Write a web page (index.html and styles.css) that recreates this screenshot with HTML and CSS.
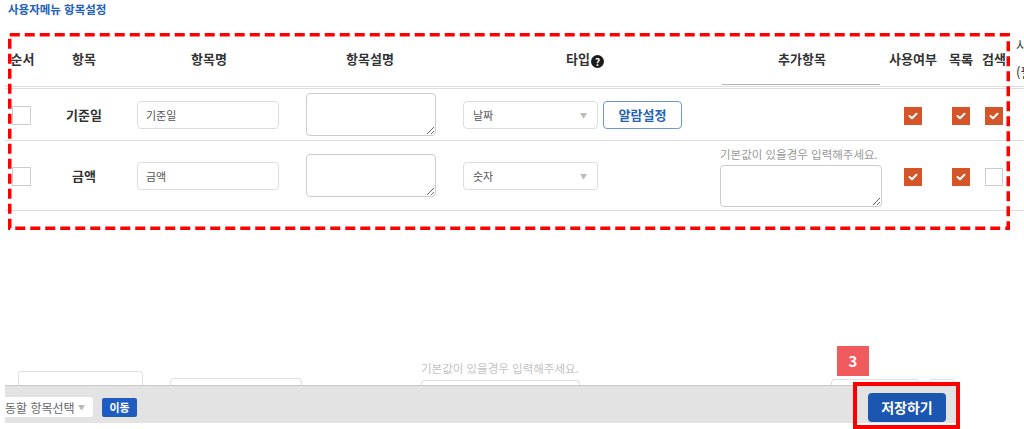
FILE: index.html
```html
<!DOCTYPE html>
<html lang="ko">
<head>
<meta charset="UTF-8">
<meta name="viewport" content="width=device-width, initial-scale=1.0">
<title>사용자메뉴 항목설정</title>
<link rel="stylesheet" href="styles.css">
</head>
<body>

<h3 class="page-title">사용자메뉴 항목설정</h3>

<div class="grid-wrap">
  <table class="item-table">
    <thead>
      <tr>
        <th class="c-order">순서</th>
        <th class="c-item">항목</th>
        <th class="c-name">항목명</th>
        <th class="c-desc">항목설명</th>
        <th class="c-type">타입<span class="help">?</span></th>
        <th class="c-extra">추가항목</th>
        <th class="c-use">사용여부</th>
        <th class="c-list">목록</th>
        <th class="c-search">검색</th>
        <th class="c-more"><span class="more-top">사</span><span class="more-bottom">(필</span></th>
      </tr>
    </thead>
    <tbody>
      <tr>
        <td class="order"><span class="chk"></span></td>
        <td class="item-name">기준일</td>
        <td class="name-cell"><input class="txt" type="text" value="기준일"></td>
        <td class="desc-cell"><textarea class="memo"></textarea></td>
        <td class="type-cell">
          <div class="type-box">
            <div class="select">날짜<span class="arrow">▼</span></div>
            <button class="alarm-btn">알람설정</button>
          </div>
        </td>
        <td class="extra-cell"></td>
        <td class="c"><span class="chk on"><svg width="10" height="8" viewBox="0 0 10 8"><polyline points="1.5,4 4,6.3 8.5,1.7" fill="none" stroke="#fff" stroke-width="2" stroke-linecap="round" stroke-linejoin="round"/></svg></span></td>
        <td class="c"><span class="chk on"><svg width="10" height="8" viewBox="0 0 10 8"><polyline points="1.5,4 4,6.3 8.5,1.7" fill="none" stroke="#fff" stroke-width="2" stroke-linecap="round" stroke-linejoin="round"/></svg></span></td>
        <td class="c"><span class="chk on"><svg width="10" height="8" viewBox="0 0 10 8"><polyline points="1.5,4 4,6.3 8.5,1.7" fill="none" stroke="#fff" stroke-width="2" stroke-linecap="round" stroke-linejoin="round"/></svg></span></td>
        <td></td>
      </tr>
      <tr>
        <td class="order"><span class="chk"></span></td>
        <td class="item-name">금액</td>
        <td class="name-cell"><input class="txt" type="text" value="금액"></td>
        <td class="desc-cell"><textarea class="memo"></textarea></td>
        <td class="type-cell">
          <div class="type-box">
            <div class="select">숫자<span class="arrow">▼</span></div>
          </div>
        </td>
        <td class="extra-cell">
          <p class="hint">기본값이 있을경우 입력해주세요.</p>
          <textarea class="memo wide"></textarea>
        </td>
        <td class="c"><span class="chk on"><svg width="10" height="8" viewBox="0 0 10 8"><polyline points="1.5,4 4,6.3 8.5,1.7" fill="none" stroke="#fff" stroke-width="2" stroke-linecap="round" stroke-linejoin="round"/></svg></span></td>
        <td class="c"><span class="chk on"><svg width="10" height="8" viewBox="0 0 10 8"><polyline points="1.5,4 4,6.3 8.5,1.7" fill="none" stroke="#fff" stroke-width="2" stroke-linecap="round" stroke-linejoin="round"/></svg></span></td>
        <td class="c"><span class="chk"></span></td>
        <td></td>
      </tr>
    </tbody>
  </table>

  <!-- annotation: dashed highlight -->
  <svg class="focus-box" width="1002" height="197" viewBox="0 0 1002 197">
    <rect x="1.75" y="1.75" width="998.5" height="193.5" fill="none" stroke="#f00" stroke-width="3.5" stroke-dasharray="10 5"/>
  </svg>
</div>

<div class="footer-area">
  <div class="ghost-row">
    <div class="ghost g1"></div>
    <div class="ghost g2"></div>
    <div class="ghost-col">
      <span class="ghost-hint">기본값이 있을경우 입력해주세요.</span>
      <div class="ghost g3"></div>
    </div>
    <div class="ghost g4"></div>
    <div class="ghost g5"></div>
  </div>

  <div class="action-bar">
    <div class="move-select">동할 항목선택<span class="arrow">▼</span></div>
    <button class="move-btn">이동</button>
    <button class="save-btn">저장하기</button>
  </div>

  <!-- annotation: step marker -->
  <span class="step-badge">3</span>
  <div class="hl-box"></div>
</div>

</body>
</html>
```

FILE: styles.css
```css
body {
  margin: 0;
  width: 1024px;
  height: 429px;
  overflow: hidden;
  display: flex;
  flex-direction: column;
  font-family: "Noto Sans CJK KR", "Noto Sans", sans-serif;
  color: #333;
  background-color: #fff;
}

.page-title {
  margin: 0;
  padding: 3px 8px 0;
  font-size: 11.5px;
  line-height: 13px;
  font-weight: 700;
  color: #2461b8;
}

.grid-wrap {
  position: relative;
  margin: 14px 0 0 5px;
}

.item-table {
  border-collapse: collapse;
  table-layout: fixed;
  width: 1063px;
}

th {
  height: 56px;
  padding: 0;
  font-size: 13px;
  font-weight: 700;
  color: #333;
  text-align: center;
  vertical-align: middle;
  border-bottom: 3px double #ddd;
}

td {
  padding: 4px 0;
  border-bottom: 1px solid #ddd;
  vertical-align: middle;
  font-size: 13px;
}

.c-order { width: 35px; }
.c-item { width: 88px; }
.c-name { width: 162px; }
.c-desc { width: 160px; }
.c-type { width: 270px; }
.c-extra { width: 164px; position: relative; }
.c-use { width: 58px; }
.c-list { width: 38px; }
.c-search { width: 28px; }
.c-more { width: 60px; text-align: left; padding-left: 8px; }

.c-extra::after {
  content: "";
  position: absolute;
  left: 2px;
  bottom: 1px;
  width: 158px;
  height: 1px;
  background-color: #b4b4b4;
}

.more-top, .more-bottom {
  display: block;
  font-weight: 400;
  line-height: 14px;
}

.more-bottom {
  margin-top: 13px;
}

.help {
  display: inline-block;
  width: 13px;
  height: 13px;
  margin-left: 1px;
  border-radius: 50%;
  background-color: #1a1a1a;
  color: #fff;
  font-size: 10px;
  line-height: 13px;
  text-align: center;
  vertical-align: -2px;
}

.order {
  text-align: center;
  padding-right: 2px;
}

.item-name {
  text-align: center;
  font-weight: 700;
  color: #333;
}

.name-cell { padding-left: 9px; }
.desc-cell { padding-left: 16px; }
.type-cell { padding-left: 13px; }

.txt {
  display: block;
  width: 142px;
  height: 28px;
  box-sizing: border-box;
  padding: 0 8px;
  border: 1px solid #ddd;
  border-radius: 4px;
  font-family: inherit;
  font-size: 11px;
  color: #555;
}

.memo {
  display: block;
  width: 130px;
  height: 43px;
  box-sizing: border-box;
  margin: 0;
  border: 1px solid #ccc;
  border-radius: 4px;
  resize: both;
}

.memo.wide {
  width: 162px;
  height: 42px;
}

.type-box {
  display: flex;
  gap: 5px;
}

.select {
  width: 135px;
  height: 28px;
  box-sizing: border-box;
  padding: 0 10px 0 9px;
  display: flex;
  align-items: center;
  justify-content: space-between;
  border: 1px solid #ddd;
  border-radius: 4px;
  font-size: 11px;
  color: #555;
}

.arrow {
  font-size: 7px;
  color: #bbb;
}

.alarm-btn {
  width: 79px;
  height: 28px;
  padding: 0;
  background-color: #fff;
  border: 1px solid #6d98d8;
  border-radius: 4px;
  font-family: inherit;
  font-size: 13px;
  font-weight: 700;
  color: #2461b8;
}

.extra-cell {
  padding: 6px 0 3px;
}

.hint {
  margin: 0 0 4px;
  font-size: 11.5px;
  line-height: 14px;
  color: #999;
}

.c { text-align: center; }

.chk {
  display: inline-flex;
  align-items: center;
  justify-content: center;
  width: 18px;
  height: 18px;
  box-sizing: border-box;
  border: 1px solid #ccc;
  background-color: #fff;
  vertical-align: middle;
}

.order .chk { width: 19px; height: 19px; }

.chk.on {
  background-color: #d4552a;
  border-color: #d4552a;
}

.focus-box {
  position: absolute;
  left: 3px;
  top: 3px;
  pointer-events: none;
}

/* bottom part */
.footer-area {
  position: relative;
  margin-top: auto;
  height: 69px;
}

.ghost-row {
  display: flex;
  align-items: flex-end;
  height: 25px;
  opacity: 0.6;
}

.ghost {
  box-sizing: border-box;
  border: 1px solid #ccc;
  border-bottom: none;
  border-radius: 4px 4px 0 0;
}

.g1 { margin-left: 18px; width: 125px; height: 14px; }
.g2 { margin-left: 27px; width: 132px; height: 7px; }
.g3 { width: 159px; height: 5px; margin-top: 5px; }
.g4 { margin-left: 251px; width: 88px; height: 6px; }
.g5 { margin-left: 10px; width: 26px; height: 6px; }

.ghost-col {
  margin-left: 119px;
  display: flex;
  flex-direction: column;
}

.ghost-hint {
  font-size: 11.5px;
  line-height: 13px;
  color: #999;
}

.action-bar {
  margin-left: 5px;
  width: 953px;
  height: 38px;
  box-sizing: border-box;
  padding-top: 5px;
  display: flex;
  align-items: center;
  background-color: #e3e3e3;
  border-top: 1px solid #c8c8c8;
}

.move-select {
  width: 88px;
  height: 20px;
  box-sizing: border-box;
  padding-right: 8px;
  display: flex;
  align-items: center;
  justify-content: space-between;
  background-color: #fff;
  border-radius: 0 3px 3px 0;
  font-size: 12px;
  color: #666;
}

.move-btn {
  margin-left: 9px;
  width: 35px;
  height: 19px;
  padding: 0;
  border: none;
  border-radius: 2px;
  background-color: #1f5cc2;
  color: #fff;
  font-family: inherit;
  font-size: 11px;
  font-weight: 700;
}

.save-btn {
  margin-left: auto;
  margin-right: 12px;
  width: 78px;
  height: 29px;
  padding: 0;
  border: none;
  border-radius: 4px;
  background-color: #1b56b0;
  color: #fff;
  font-family: inherit;
  font-size: 14px;
  font-weight: 700;
}

.step-badge {
  position: absolute;
  left: 837px;
  top: -14px;
  width: 32px;
  height: 30px;
  background-color: #f25b5e;
  color: #fff;
  font-size: 15px;
  font-weight: 700;
  line-height: 30px;
  text-align: center;
}

.hl-box {
  position: absolute;
  left: 853px;
  top: 22px;
  width: 107px;
  height: 47px;
  box-sizing: border-box;
  border: 4px solid #f00;
}
```
